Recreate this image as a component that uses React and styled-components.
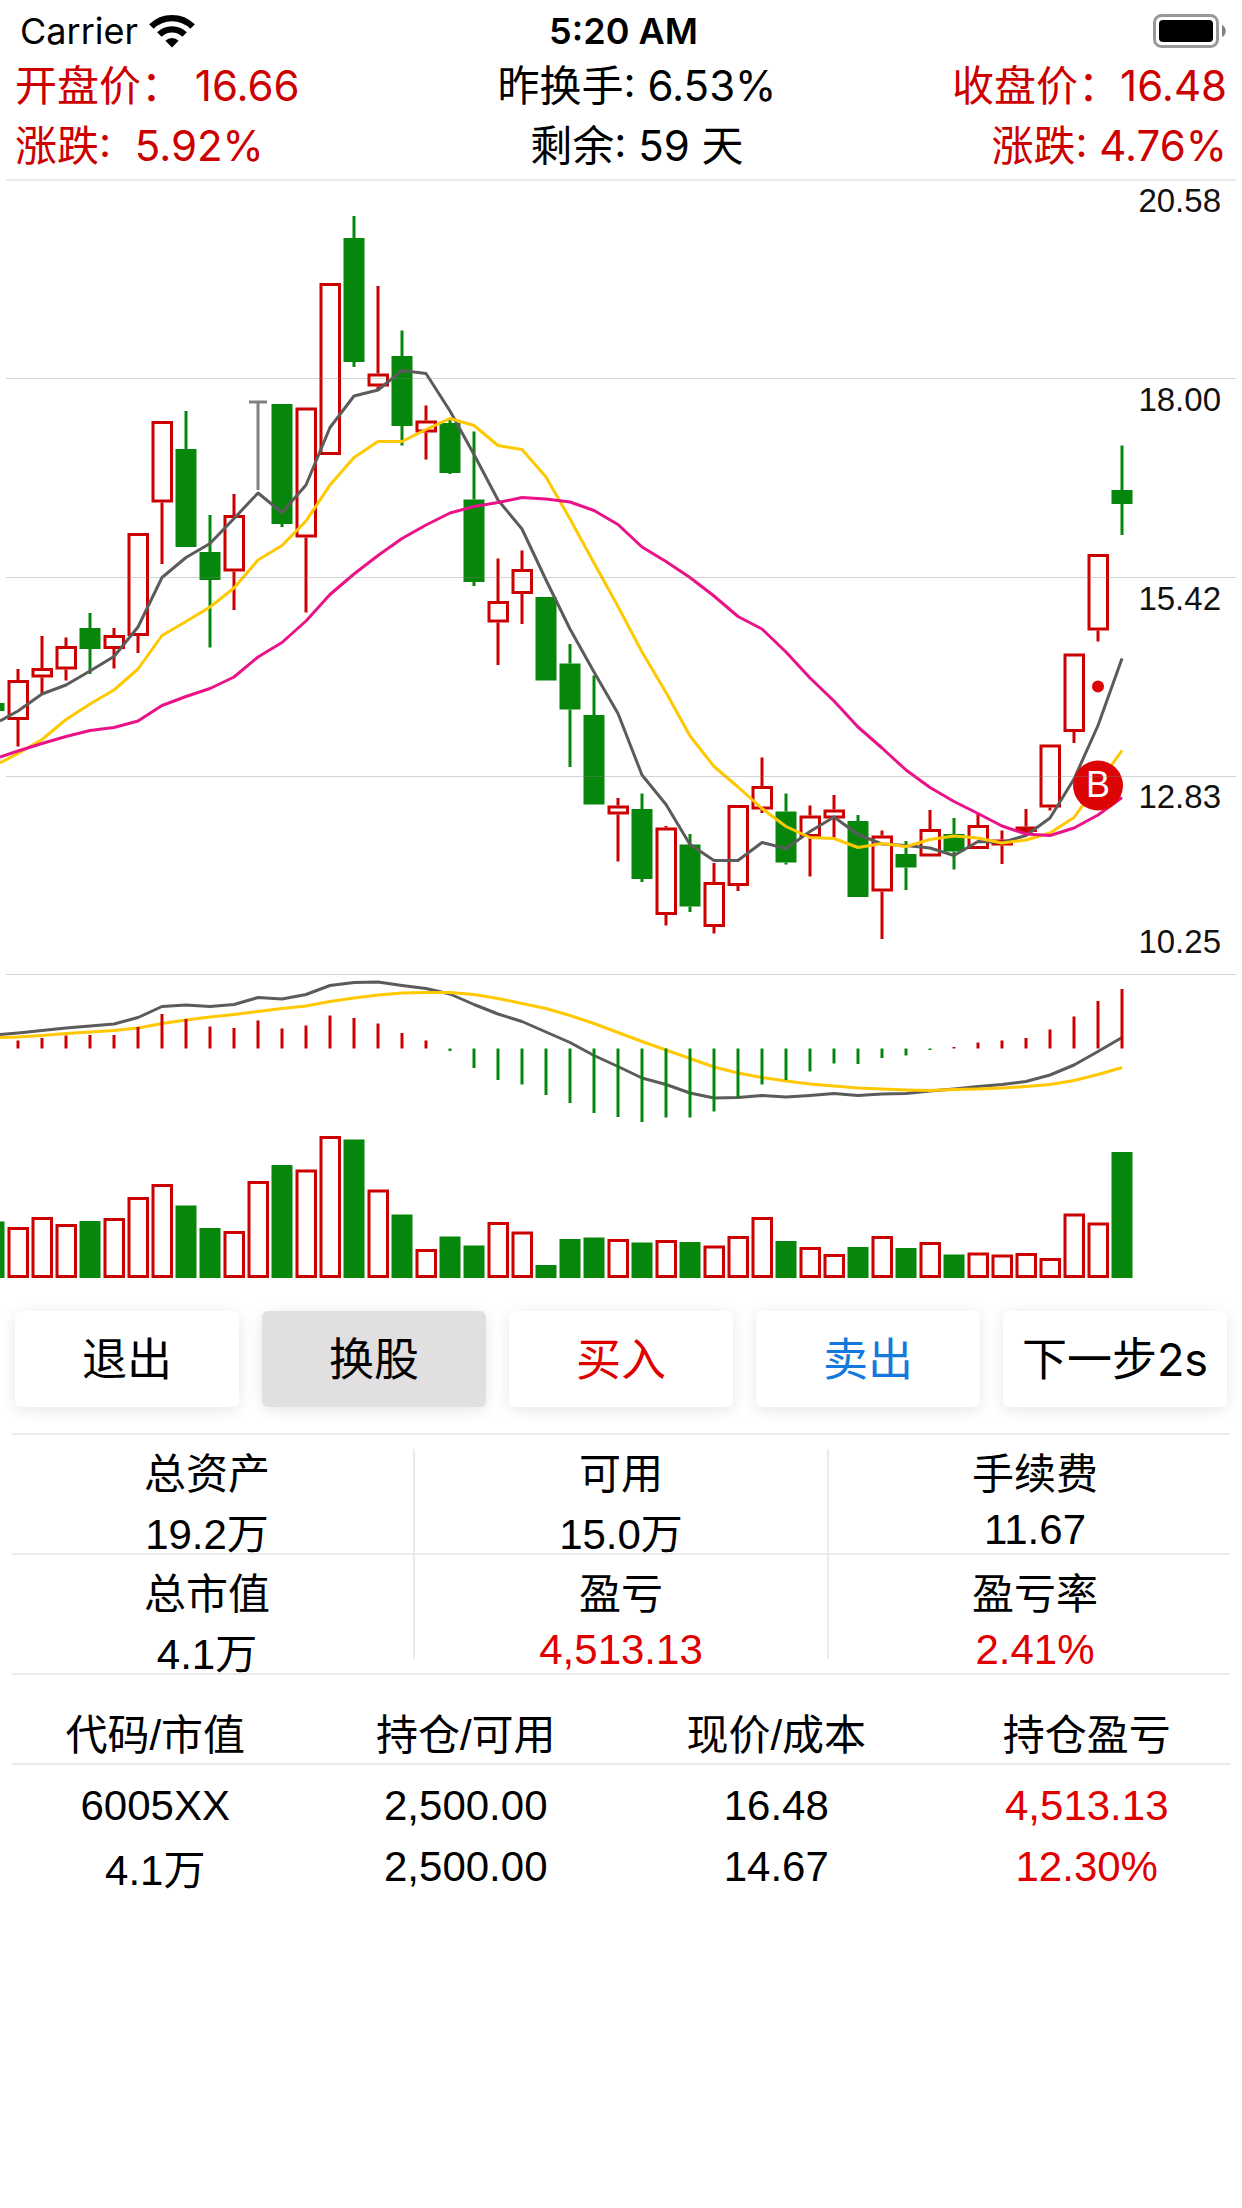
import React from "react"
import styled, { createGlobalStyle } from "styled-components"

const RED = "#cc0000"
const GREEN = "#06870b"
const GREY = "#5b5b5b"
const YELLOW = "#ffc800"
const PINK = "#eb1289"

const UI_FONT = `Inter, "Noto Sans CJK SC", sans-serif`
const NUMBER_FONT = `"Liberation Sans", "Noto Sans CJK SC", sans-serif`

// chart geometry, in viewBox units
const STEP = 24
const FIRST_X = 18
const MACD_ZERO = 1048.5
const VOLUME_BASE = 1278

// [direction, high, body top, body bottom, low]
const candles = [
    ["up", 669, 680, 720, 746.5],
    ["up", 636, 668, 677.5, 693.5],
    ["up", 637.5, 646, 669.5, 680.5],
    ["down", 613, 628, 649, 674],
    ["up", 628, 635, 649, 668.5],
    ["up", 533, 533, 636, 653],
    ["up", 421, 421, 502.5, 564],
    ["down", 411, 449, 547, 547],
    ["down", 515, 552, 580, 647.5],
    ["up", 494, 515, 571.5, 610],
    ["flat", 402, 402, 402, 490],
    ["down", 404, 404, 524, 527],
    ["up", 407.5, 407.5, 537.5, 612.5],
    ["up", 283, 283, 455, 455],
    ["down", 216, 238, 362, 367],
    ["up", 286, 373.5, 386.5, 389],
    ["down", 330.5, 356, 426, 445.5],
    ["up", 405.5, 420.5, 432.5, 459.5],
    ["down", 420, 423, 473, 474],
    ["down", 431.5, 499.5, 582, 586],
    ["up", 558.5, 601, 622.5, 665],
    ["up", 550.5, 569, 594, 624],
    ["down", 597, 597, 680.5, 680.5],
    ["down", 644, 663.5, 709.5, 767],
    ["down", 675.5, 715, 804.5, 804.5],
    ["up", 798, 805.5, 814.5, 861.5],
    ["down", 793.5, 809, 879, 882],
    ["up", 826, 827.5, 915, 925.5],
    ["down", 834, 844.5, 906.5, 912],
    ["up", 863, 882, 927, 933.5],
    ["up", 805, 805, 886, 891],
    ["up", 757.5, 786, 809.5, 813],
    ["down", 793.5, 811.5, 862.5, 864.5],
    ["up", 805.5, 815.5, 837, 876.5],
    ["up", 795, 809.5, 818.5, 838],
    ["down", 815, 821, 897, 897],
    ["up", 830.5, 835.5, 891.5, 939],
    ["down", 841, 854, 867.5, 890],
    ["up", 810, 829, 856.5, 856.5],
    ["down", 818, 834, 851.5, 869.5],
    ["up", 813.5, 825, 849, 849],
    ["up", 830.5, 839.5, 845.5, 864],
    ["up", 809, 826.5, 832, 836],
    ["up", 744.5, 744.5, 807.5, 810.5],
    ["up", 653.5, 653.5, 732, 743],
    ["up", 554, 554, 630.5, 641.5],
    ["down", 445.5, 490, 504, 535],
]

// every series starts with its value on the left edge of the chart
const ma5 = [
    721, 711, 694, 685, 671, 656.5, 627, 577.5, 557.5, 543.5, 518.5, 493,
    512.5, 485, 427.5, 396, 390, 370.5, 373.5, 411, 454.5, 500, 529, 580, 629,
    672, 713.5, 775, 804.5, 844.5, 860.5, 860.5, 842.5, 848.5, 831.5, 817,
    834.5, 844, 845.5, 848, 855.5, 841.5, 842.5, 835.5, 818, 779, 725.5, 658.5,
]
const ma10 = [
    763, 753.5, 739.5, 719.5, 704, 690, 669, 635.5, 621.5, 607, 588, 560,
    545.5, 521, 485, 457.5, 441.5, 441.5, 429.5, 418.5, 425.5, 445.5, 449.5,
    477, 519, 563, 606.5, 652, 692.5, 736, 766.5, 787, 808.5, 826.5, 837.5,
    838.5, 847.5, 843.5, 846.5, 839.5, 836, 838, 843, 840, 833, 817.5, 784,
    750.5,
]
const ma20 = [
    757, 751, 743.5, 736.5, 730.5, 727.5, 721, 705.5, 696.5, 688.5, 677, 657,
    642.5, 621, 594.5, 574, 555.5, 538.5, 525, 513, 506.5, 502.5, 497.5, 499,
    502, 510.5, 524.5, 547, 561.5, 577.5, 596, 616.5, 629, 652, 678, 701, 727,
    748, 770, 787.5, 801.5, 813.5, 826, 834, 835.5, 828, 815, 797.5,
]
const dif = [
    1034.5, 1033, 1030.5, 1028, 1026, 1024, 1017.5, 1006.5, 1005, 1006.5,
    1004.5, 997.5, 999, 994.5, 985.5, 982.5, 982, 985.5, 988.5, 994, 1004.5,
    1014, 1021.5, 1032, 1042.5, 1055.5, 1066.5, 1078, 1084.5, 1093, 1098,
    1097.5, 1095.5, 1097, 1095.5, 1093.5, 1095.5, 1094, 1093.5, 1091, 1089,
    1086.5, 1084.5, 1081.5, 1075, 1065, 1051.5, 1037.5,
]
const dea = [
    1037.5, 1037, 1035.5, 1033.5, 1032, 1030.5, 1028, 1023.5, 1020, 1017,
    1014.5, 1011.5, 1008.5, 1006, 1001.5, 998, 995, 993, 992.5, 992.5, 994.5,
    998.5, 1003.5, 1008.5, 1015.5, 1023.5, 1032.5, 1041.5, 1050, 1058.5, 1067,
    1073, 1077.5, 1081, 1084, 1086, 1088, 1089, 1090, 1090.5, 1089.5, 1089,
    1088, 1086.5, 1084.5, 1080.5, 1074.5, 1067.5,
]

// positive bars go up in red, negative ones hang down in green
const macd = [
    8, 10.5, 13, 13.5, 13.5, 21.5, 34.5, 29.5, 22, 20.5, 28, 20, 23, 33, 30.5,
    25, 15.5, 8, -2.5, -19.5, -31.5, -36, -46.5, -54.5, -64.5, -68.5, -73.5,
    -69, -69, -63, -49, -36, -31.5, -23, -15, -15.5, -9.5, -7, -1.5, 1.5, 6, 8,
    10.5, 19, 32, 47.5, 59.5,
]

const volumes = [
    51, 61, 54, 57, 60, 81, 94, 72.5, 50, 47, 97, 113, 108.5, 142, 138.5,
    88.5, 63.5, 29, 41.5, 32.5, 56, 46.5, 13, 39, 40.5, 39, 35.5, 38, 36,
    32.5, 42, 61, 37, 31, 24, 31, 42, 30, 36, 23.5, 25.5, 23.5, 25, 20, 64.5,
    55.5, 126,
]

const gridLines = [378.5, 577.5, 776.5, 974.5]
const prices = [
    { label: "20.58", y: 212 },
    { label: "18.00", y: 411 },
    { label: "15.42", y: 610 },
    { label: "12.83", y: 808 },
    { label: "10.25", y: 953 },
]

const summary = [
    [
        { label: "总资产", value: "19.2万" },
        { label: "可用", value: "15.0万" },
        { label: "手续费", value: "11.67" },
    ],
    [
        { label: "总市值", value: "4.1万" },
        { label: "盈亏", value: "4,513.13", hot: true },
        { label: "盈亏率", value: "2.41%", hot: true },
    ],
]

const xAt = i => FIRST_X + i * STEP
const toPoints = series =>
    series.map((y, i) => `${i === 0 ? 0 : xAt(i - 1)},${y}`).join(" ")

const Bar = ({ x, top, bottom, up }) =>
    up ? (
        <rect
            x={x - 9}
            y={top + 1.5}
            width={18.5}
            height={Math.max(bottom - top - 3, 1)}
            fill="none"
            stroke={RED}
            strokeWidth={3}
        />
    ) : (
        <rect
            x={x - 10.5}
            y={top}
            width={21}
            height={bottom - top}
            fill={GREEN}
        />
    )

const Candle = ({ x, data }) => {
    const [direction, high, top, bottom, low] = data
    if (direction === "flat") {
        return (
            <path
                d={`M${x - 9} ${high}h18M${x} ${high}V${low}`}
                stroke="#808080"
                strokeWidth={3}
            />
        )
    }
    const up = direction === "up"
    return (
        <g>
            <path
                d={`M${x} ${high}V${top}M${x} ${bottom}V${low}`}
                stroke={up ? RED : GREEN}
                strokeWidth={3}
            />
            <Bar x={x} top={top} bottom={bottom} up={up} />
        </g>
    )
}

const Line = ({ series, color }) => (
    <polyline
        points={toPoints(series)}
        fill="none"
        stroke={color}
        strokeWidth={3}
        strokeLinejoin="round"
    />
)

const StockChart = () => (
    <Chart viewBox="0 181 1242 1100" role="img" aria-label="K线图">
        <Bar x={-6} top={703} bottom={711} />
        {candles.map((c, i) => (
            <Candle key={i} x={xAt(i)} data={c} />
        ))}
        <Line series={ma5} color={GREY} />
        <Line series={ma10} color={YELLOW} />
        <Line series={ma20} color={PINK} />

        <circle cx={1098} cy={686.5} r={6} fill="#dc0404" />
        <circle cx={1098} cy={785.5} r={25} fill="#dc0404" />
        <Marker x={1098} y={797}>
            B
        </Marker>

        {gridLines.map(y => (
            <path
                key={y}
                d={`M6 ${y}H1236`}
                stroke="#808080"
                strokeOpacity={0.35}
            />
        ))}
        {prices.map(p => (
            <Price key={p.label} x={1221} y={p.y}>
                {p.label}
            </Price>
        ))}

        <Line series={dif} color={GREY} />
        <Line series={dea} color={YELLOW} />
        {macd.map((v, i) => (
            <path
                key={i}
                d={`M${xAt(i)} ${MACD_ZERO}v${-v}`}
                stroke={v > 0 ? RED : GREEN}
                strokeWidth={3}
            />
        ))}

        <Bar x={-6} top={1221.5} bottom={VOLUME_BASE} />
        {volumes.map((v, i) => (
            <Bar
                key={i}
                x={xAt(i)}
                top={VOLUME_BASE - v}
                bottom={VOLUME_BASE}
                up={candles[i][0] !== "down"}
            />
        ))}
    </Chart>
)

const WifiIcon = () => (
    <svg width="46" height="34" viewBox="0 0 46 34" aria-hidden="true">
        <g fill="none" stroke="#000" strokeWidth="6.4">
            <path d="M2.4 12.6a29.2 29.2 0 0 1 41.2 0" />
            <path d="M10.4 20.6a17.9 17.9 0 0 1 25.2 0" />
        </g>
        <path d="M23 33.4l-6.6-6.6a9.4 9.4 0 0 1 13.2 0z" />
    </svg>
)

const BatteryIcon = () => (
    <svg width="74" height="34" viewBox="0 0 74 34" aria-hidden="true">
        <rect
            x="1.5"
            y="1.5"
            width="63"
            height="31"
            rx="7"
            fill="none"
            stroke="#999"
            strokeWidth="3"
        />
        <rect x="6" y="6" width="54" height="22" rx="4" />
        <path d="M69 11c5 2 5 10 0 12z" fill="#808080" />
    </svg>
)

export default function App() {
    return (
        <Page>
            <GlobalStyle />
            <StatusBar>
                <Carrier>
                    Carrier
                    <WifiIcon />
                </Carrier>
                <Clock>5:20 AM</Clock>
                <Battery>
                    <BatteryIcon />
                </Battery>
            </StatusBar>

            <Quote>
                <Figure $hot>开盘价： 16.66</Figure>
                <Figure $align="center">昨换手: 6.53%</Figure>
                <Figure $align="right" $hot>
                    收盘价：16.48
                </Figure>
                <Figure $hot>{"涨跌:  5.92%"}</Figure>
                <Figure $align="center">剩余: 59 天</Figure>
                <Figure $align="right" $hot>
                    涨跌: 4.76%
                </Figure>
            </Quote>
            <Rule $inset={6} />

            <StockChart />

            <Actions>
                <ActionButton type="button">退出</ActionButton>
                <ActionButton type="button" $active>
                    换股
                </ActionButton>
                <ActionButton type="button" $color="#e00000">
                    买入
                </ActionButton>
                <ActionButton type="button" $color="#1478dc">
                    卖出
                </ActionButton>
                <ActionButton type="button">下一步2s</ActionButton>
            </Actions>

            <Rule $inset={12} />
            <Summary>
                {summary.map((row, i) => (
                    <React.Fragment key={i}>
                        {i > 0 && <Rule $inset={12} />}
                        <SummaryRow>
                            {row.map(item => (
                                <SummaryCell key={item.label}>
                                    <Label>{item.label}</Label>
                                    <Value $hot={item.hot}>{item.value}</Value>
                                </SummaryCell>
                            ))}
                        </SummaryRow>
                    </React.Fragment>
                ))}
            </Summary>
            <Rule $inset={12} />

            <Holdings>
                <thead>
                    <tr>
                        <HeadCell scope="col">代码/市值</HeadCell>
                        <HeadCell scope="col">持仓/可用</HeadCell>
                        <HeadCell scope="col">现价/成本</HeadCell>
                        <HeadCell scope="col">持仓盈亏</HeadCell>
                    </tr>
                </thead>
                <tbody>
                    <tr>
                        <Cell>6005XX</Cell>
                        <Cell>2,500.00</Cell>
                        <Cell>16.48</Cell>
                        <Cell $hot>4,513.13</Cell>
                    </tr>
                    <tr>
                        <Cell>4.1万</Cell>
                        <Cell>2,500.00</Cell>
                        <Cell>14.67</Cell>
                        <Cell $hot>12.30%</Cell>
                    </tr>
                </tbody>
            </Holdings>
        </Page>
    )
}

const GlobalStyle = createGlobalStyle`
    * {
        box-sizing: border-box;
    }

    body {
        margin: 0;
        background: #fff;
        color: #000;
        font-family: ${UI_FONT};
    }
`

const Page = styled.main`
    min-height: 100vh;
    overflow: hidden;
`

const StatusBar = styled.header`
    display: grid;
    grid-template-columns: 1fr auto 1fr;
    align-items: center;
    height: 56px;
    padding: 5px 15px 0 20px;
    font-size: 36px;
    line-height: 50px;
`

const Carrier = styled.div`
    display: flex;
    align-items: center;
    gap: 11px;
`

const Clock = styled.time`
    font-weight: 600;
`

const Battery = styled.div`
    display: flex;
    justify-content: flex-end;
`

const Quote = styled.section`
    display: grid;
    grid-template-columns: 13fr 13fr 12fr;
    padding: 0 15px 3px;
`

const Figure = styled.span`
    font-size: 42px;
    line-height: 60px;
    white-space: pre;
    text-align: ${p => p.$align || "left"};
    color: ${p => (p.$hot ? RED : "#000")};
`

const Rule = styled.hr`
    height: 2px;
    margin: 0 ${p => p.$inset}px;
    border: 0;
    background: #ebebeb;
`

const Chart = styled.svg`
    display: block;
    width: 100%;
    height: auto;
`

const Price = styled.text`
    font-family: ${NUMBER_FONT};
    font-size: 33px;
    text-anchor: end;
    fill: #111;
`

const Marker = styled.text`
    font-family: ${NUMBER_FONT};
    font-size: 36px;
    text-anchor: middle;
    fill: #fff;
`

const Actions = styled.section`
    display: grid;
    grid-template-columns: repeat(5, 1fr);
    gap: 23px;
    padding: 30px 15px 26px;
`

const ActionButton = styled.button`
    height: 96px;
    padding: 2px 0 0;
    border: 0;
    border-radius: 6px;
    background: ${p => (p.$active ? "#e1dfe0" : "#fff")};
    box-shadow: 0 3px 15px rgba(0, 0, 0, 0.1);
    color: ${p => p.$color || "#000"};
    font-family: ${UI_FONT};
    font-size: 45px;
    line-height: 60px;
    white-space: nowrap;
`

const Summary = styled.section`
    position: relative;

    &::before,
    &::after {
        content: "";
        position: absolute;
        top: 14px;
        bottom: 14px;
        left: calc(100% / 3 - 1px);
        width: 2px;
        background: #ebebeb;
    }

    &::after {
        left: calc(200% / 3 - 1px);
    }
`

const SummaryRow = styled.dl`
    display: grid;
    grid-template-columns: repeat(3, 1fr);
    margin: 0;
    padding-top: 12px;
`

const SummaryCell = styled.div`
    display: grid;
    grid-template-rows: 46px 46px;
    gap: 14px;
    font-family: ${NUMBER_FONT};
    font-size: 42px;
`

const Label = styled.dt`
    display: flex;
    align-items: center;
    justify-content: center;
`

const Value = styled.dd`
    display: flex;
    align-items: center;
    justify-content: center;
    margin: 0;
    color: ${p => (p.$hot ? "#e00000" : "#000")};
`

const Holdings = styled.table`
    width: 100%;
    table-layout: fixed;
    border-collapse: collapse;
    font-family: ${NUMBER_FONT};
    font-size: 42px;

    thead tr {
        background: linear-gradient(#ebebeb, #ebebeb) center bottom /
            calc(100% - 24px) 2px no-repeat;
    }

    tbody tr:first-child td {
        height: 71px;
        padding-top: 11px;
    }
`

const HeadCell = styled.th`
    height: 90px;
    padding: 24px 0 2px;
    font-weight: 400;
`

const Cell = styled.td`
    height: 60px;
    padding: 0;
    text-align: center;
    color: ${p => (p.$hot ? "#e00000" : "#000")};
`
